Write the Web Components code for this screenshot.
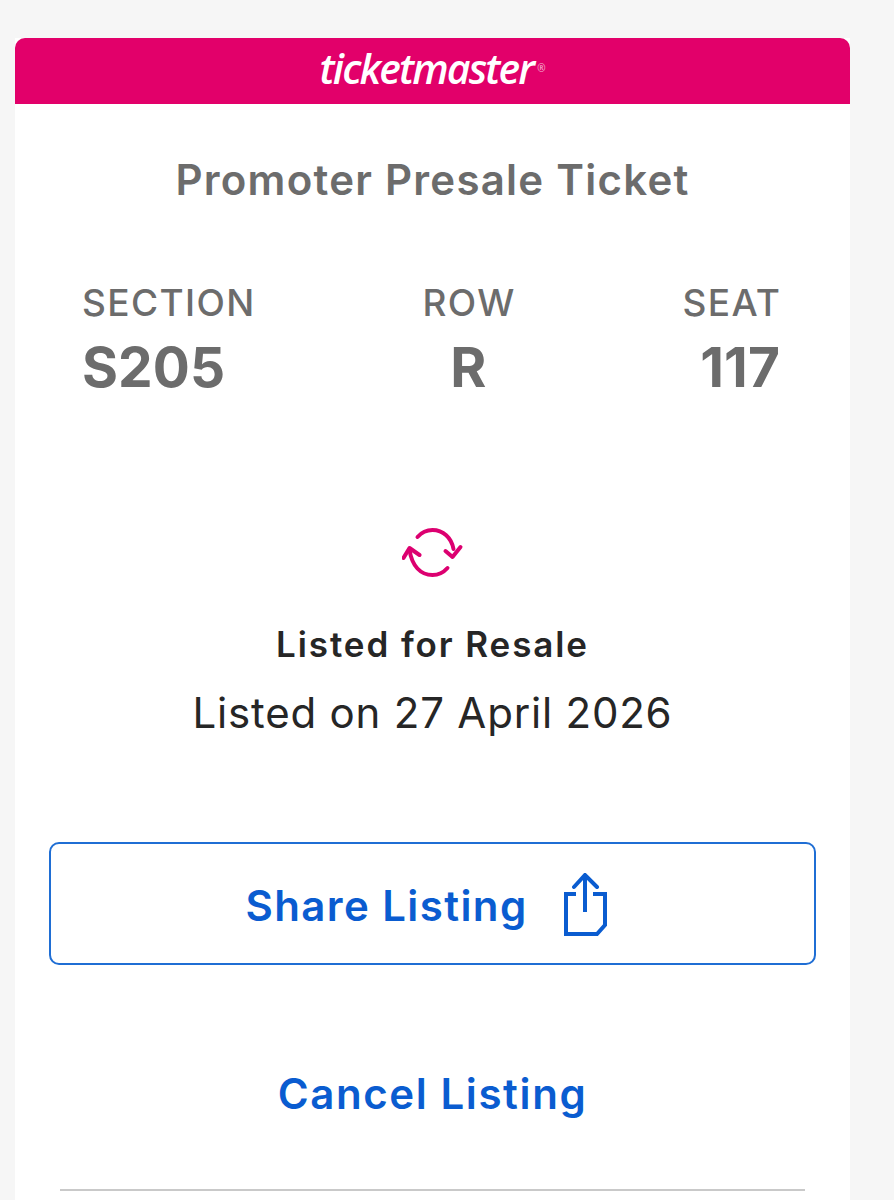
<!DOCTYPE html>
<html><head><meta charset="utf-8">
<style>
html,body{margin:0;padding:0;background:#f6f6f6;height:1200px;overflow:hidden}
body{font-family:"Inter","Noto Sans",sans-serif}
</style></head><body>
<ticket-card>
  <ticket-header slot="header">ticketmaster</ticket-header>
  <h-title>Promoter Presale Ticket</h-title>
  <seat-row>
    <seat-col label="SECTION" value="S205" align="left"></seat-col>
    <seat-col label="ROW" value="R" align="center"></seat-col>
    <seat-col label="SEAT" value="117" align="right"></seat-col>
  </seat-row>
  <resale-status heading="Listed for Resale" detail="Listed on 27 April 2026"></resale-status>
  <action-button>Share Listing</action-button>
  <text-link>Cancel Listing</text-link>
  <card-divider></card-divider>
</ticket-card>
<script>
function def(name, html){
  customElements.define(name, class extends HTMLElement{
    connectedCallback(){
      if(this.shadowRoot) return;
      const r=this.attachShadow({mode:'open'});
      r.innerHTML = typeof html==='function' ? html(this) : html;
    }
  });
}
def('ticket-card',`<style>
:host{display:block;margin:38px 44px 0 15px;background:#fff;height:1200px}
.body{display:flex;flex-direction:column}
</style><slot name="header"></slot><div class="body"><slot></slot></div>`);
def('ticket-header',`<style>
:host{display:flex;justify-content:center;align-items:center;height:66px;padding-bottom:6px;box-sizing:border-box;background:#e2006a;border-radius:10px 10px 0 0;color:#fff;font:italic 600 41px/1 "Open Sans",sans-serif;letter-spacing:-1.9px}
sup{font:400 10px/1 "Open Sans",sans-serif;font-style:normal;letter-spacing:0;opacity:.7;margin-left:4px;align-self:center}
</style><span><slot></slot></span><sup>®</sup>`);
def('h-title',`<style>
:host{display:block;margin-top:50px;text-align:center;color:#6c6c6c;font-size:42px;line-height:52px;font-weight:600;letter-spacing:1.25px}
</style><slot></slot>`);
def('seat-row',`<style>
:host{display:flex;justify-content:space-between;margin:75px 70px 0 67px;align-items:flex-start}
</style><slot></slot>`);
def('seat-col',el=>`<style>
:host{display:block;text-align:${el.getAttribute('align')};color:#6c6c6c}
.l{font-size:37px;line-height:44px;font-weight:500;letter-spacing:1.4px;margin-right:-1.4px}
.v{font-size:55px;line-height:64px;font-weight:700;margin-top:10px;letter-spacing:.1px}
</style><div class="l">${el.getAttribute('label')}</div><div class="v">${el.getAttribute('value')}</div>`);
def('resale-status',el=>`<style>
:host{display:flex;flex-direction:column;align-items:center;color:#262626;margin-top:126px}
svg{display:block}
.h{font-size:35px;line-height:44px;font-weight:600;margin-top:43px;letter-spacing:1.9px}
.d{font-size:42px;line-height:52px;margin-top:21px;letter-spacing:.8px;font-weight:400}
</style><svg width="62" height="54" viewBox="0 0 62 54" fill="none" stroke="#dc0070" stroke-width="4" stroke-linecap="round" stroke-linejoin="round">
<path d="M15.500 12C19.500 7.500 24.500 5 30.500 5 41 5 49.500 12.500 51.500 24"/><path d="M43.500 26 50.500 32 58.500 22"/>
<path d="M45.500 43C41.500 47.500 36.500 50 30.500 50 18.500 50 10 41 7.500 25"/><path d="M1.500 33 7.500 23 17.500 30"/>
</svg><div class="h">${el.getAttribute('heading')}</div><div class="d">${el.getAttribute('detail')}</div>`);
def('action-button',`<style>
:host{display:flex;align-items:center;justify-content:center;gap:33px;box-sizing:border-box;height:123px;margin:103px 34px 0 34px;border:2px solid #1f6ed4;border-radius:10px;color:#0a5cd0;font-size:42px;font-weight:600;letter-spacing:1.4px;padding-right:9px}
span{padding-top:3px}
svg{display:block;margin-top:3px}
</style><span><slot></slot></span><svg width="50" height="64" viewBox="0 0 50 64" fill="none" stroke="#0a5cd0" stroke-width="4" stroke-linejoin="miter">
<path d="M24 2V39"/><path d="M13 14 24 2 36 14" stroke-linecap="round"/>
<path d="M15 21H5V61H36L44 52V21H32"/>
</svg>`);
def('text-link',`<style>
:host{display:block;text-align:center;color:#0a5cd0;font-size:42px;line-height:52px;font-weight:600;letter-spacing:1.6px;margin-top:103px}
</style><slot></slot>`);
def('card-divider',`<style>
:host{display:block;height:2px;background:#c9c9c9;margin:69px 45px 0 45px}
</style>`);
</script>
</body></html>
